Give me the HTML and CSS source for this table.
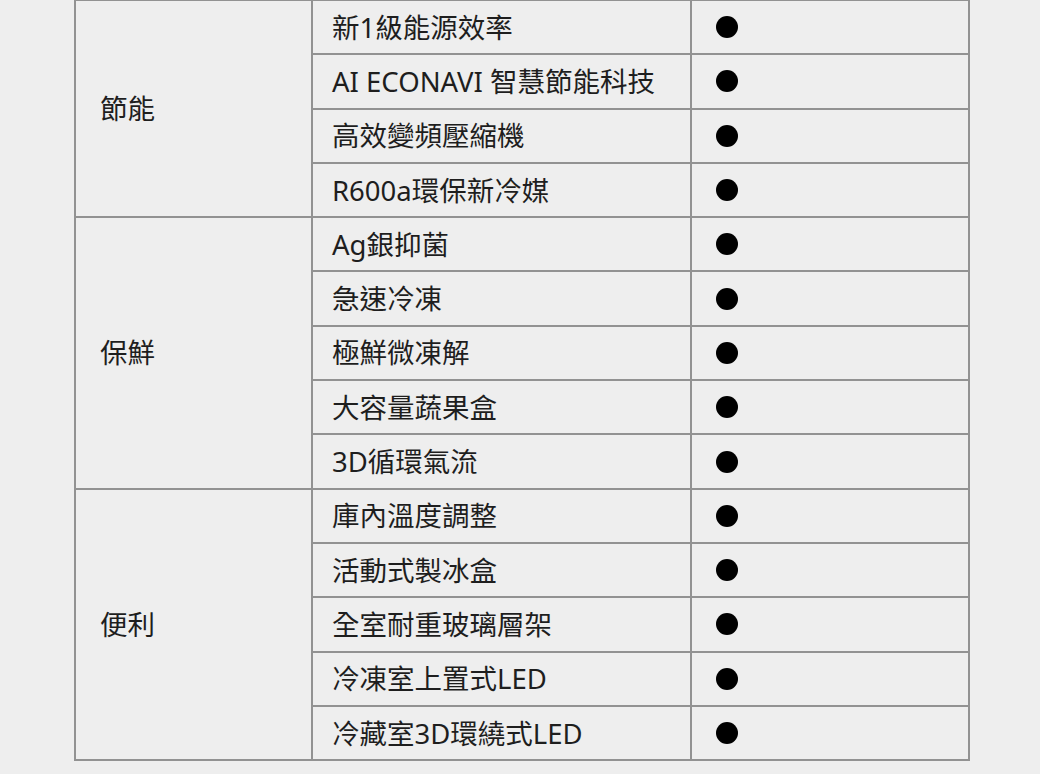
FILE: index.html
```html
<!DOCTYPE html>
<html lang="zh-Hant">
<head>
<meta charset="utf-8">
<link rel="stylesheet" href="styles.css">
</head>
<body>
<table class="spec">
  <colgroup>
    <col class="c-cat">
    <col class="c-feat">
    <col class="c-mark">
  </colgroup>
  <tbody>
    <tr><td class="cat" rowspan="4">節能</td><td class="feat">新1級能源效率</td><td class="mark"><span class="dot"></span></td></tr>
    <tr><td class="feat">AI ECONAVI 智慧節能科技</td><td class="mark"><span class="dot"></span></td></tr>
    <tr><td class="feat">高效變頻壓縮機</td><td class="mark"><span class="dot"></span></td></tr>
    <tr><td class="feat">R600a環保新冷媒</td><td class="mark"><span class="dot"></span></td></tr>
    <tr><td class="cat" rowspan="5">保鮮</td><td class="feat">Ag銀抑菌</td><td class="mark"><span class="dot"></span></td></tr>
    <tr><td class="feat">急速冷凍</td><td class="mark"><span class="dot"></span></td></tr>
    <tr><td class="feat">極鮮微凍解</td><td class="mark"><span class="dot"></span></td></tr>
    <tr><td class="feat">大容量蔬果盒</td><td class="mark"><span class="dot"></span></td></tr>
    <tr><td class="feat">3D循環氣流</td><td class="mark"><span class="dot"></span></td></tr>
    <tr><td class="cat" rowspan="5">便利</td><td class="feat">庫內溫度調整</td><td class="mark"><span class="dot"></span></td></tr>
    <tr><td class="feat">活動式製冰盒</td><td class="mark"><span class="dot"></span></td></tr>
    <tr><td class="feat">全室耐重玻璃層架</td><td class="mark"><span class="dot"></span></td></tr>
    <tr><td class="feat">冷凍室上置式LED</td><td class="mark"><span class="dot"></span></td></tr>
    <tr><td class="feat">冷藏室3D環繞式LED</td><td class="mark"><span class="dot"></span></td></tr>
  </tbody>
</table>
</body>
</html>
```

FILE: styles.css
```css
html, body {
  margin: 0;
  padding: 0;
  background: #eeeeee;
}

body {
  font-family: "Noto Sans", "Noto Sans CJK TC", sans-serif;
  font-size: 27.5px;
  color: #1e1e1e;
  overflow: hidden;
}

.spec {
  border-collapse: collapse;
  table-layout: fixed;
  width: 894px;
  margin: -1px 0 0 74px;
}

.c-cat { width: 237px; }
.c-feat { width: 379px; }
.c-mark { width: 278px; }

.spec td {
  border: 2px solid #929292;
  padding: 0;
  vertical-align: middle;
  line-height: 1.2;
}

.spec tr {
  height: 54.3px;
}

.cat {
  padding-left: 24px !important;
}

.feat {
  padding-left: 19px !important;
  white-space: nowrap;
}

.mark {
  padding-left: 24px !important;
}

.dot {
  display: block;
  width: 22px;
  height: 22px;
  border-radius: 50%;
  background: #000;
}
```
